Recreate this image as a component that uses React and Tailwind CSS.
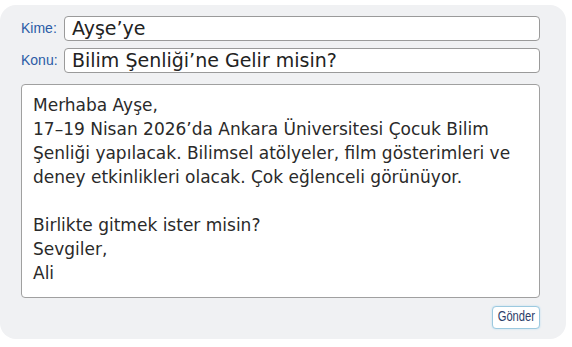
export default function App() {
  const body = [
    'Merhaba Ayşe,',
    '17–19 Nisan 2026’da Ankara Üniversitesi Çocuk Bilim',
    'Şenliği yapılacak. Bilimsel atölyeler, film gösterimleri ve',
    'deney etkinlikleri olacak. Çok eğlenceli görünüyor.',
    '',
    'Birlikte gitmek ister misin?',
    'Sevgiler,',
    'Ali',
  ];

  return (
    <div className="w-[572px] h-[347px] bg-white pt-[5px]">
      <div className="w-[566px] h-[334px] bg-[#f0f1f3] rounded-[16px] pl-[21px] pt-[11px] flex flex-col">
        <div className="flex items-center h-[25px]">
          <span className="w-[43px] text-[14px] text-[#2b5ca6] font-['Liberation_Sans',sans-serif]">Kime:</span>
          <div className="w-[476px] h-[25px] bg-white border border-[#9a9a9a] rounded-[4px] pl-[7px] flex items-center text-[19px] text-[#222] font-['DejaVu_Sans',sans-serif] leading-none">
            Ayşe’ye
          </div>
        </div>
        <div className="flex items-center h-[25px] mt-[7px]">
          <span className="w-[43px] text-[14px] text-[#2b5ca6] font-['Liberation_Sans',sans-serif]">Konu:</span>
          <div className="w-[476px] h-[25px] bg-white border border-[#9a9a9a] rounded-[4px] pl-[7px] flex items-center text-[19px] text-[#222] font-['DejaVu_Sans',sans-serif] leading-none">
            Bilim Şenliği’ne Gelir misin?
          </div>
        </div>
        <div className="w-[519px] h-[214px] mt-[11px] bg-white border border-[#a0a0a0] rounded-[4px] pl-[11px] pt-[8px] text-[17px] leading-[24px] text-[#2a2a2a] font-['DejaVu_Sans',sans-serif]">
          {body.map((line, i) => (
            <div key={i} className="h-[24px] whitespace-nowrap">{line}</div>
          ))}
        </div>
        <div className="w-[519px] flex justify-end mt-[8px]">
          <button className="w-[48px] h-[23px] bg-white border border-[#9cc9df] rounded-[4px] shadow-[0_0_2px_#b5dcef] flex items-center justify-center font-['Liberation_Sans',sans-serif] leading-none">
            <span className="inline-block text-[14px] text-[#2c3e6a] scale-x-[0.8] -mt-[3px]">Gönder</span>
          </button>
        </div>
      </div>
    </div>
  );
}
